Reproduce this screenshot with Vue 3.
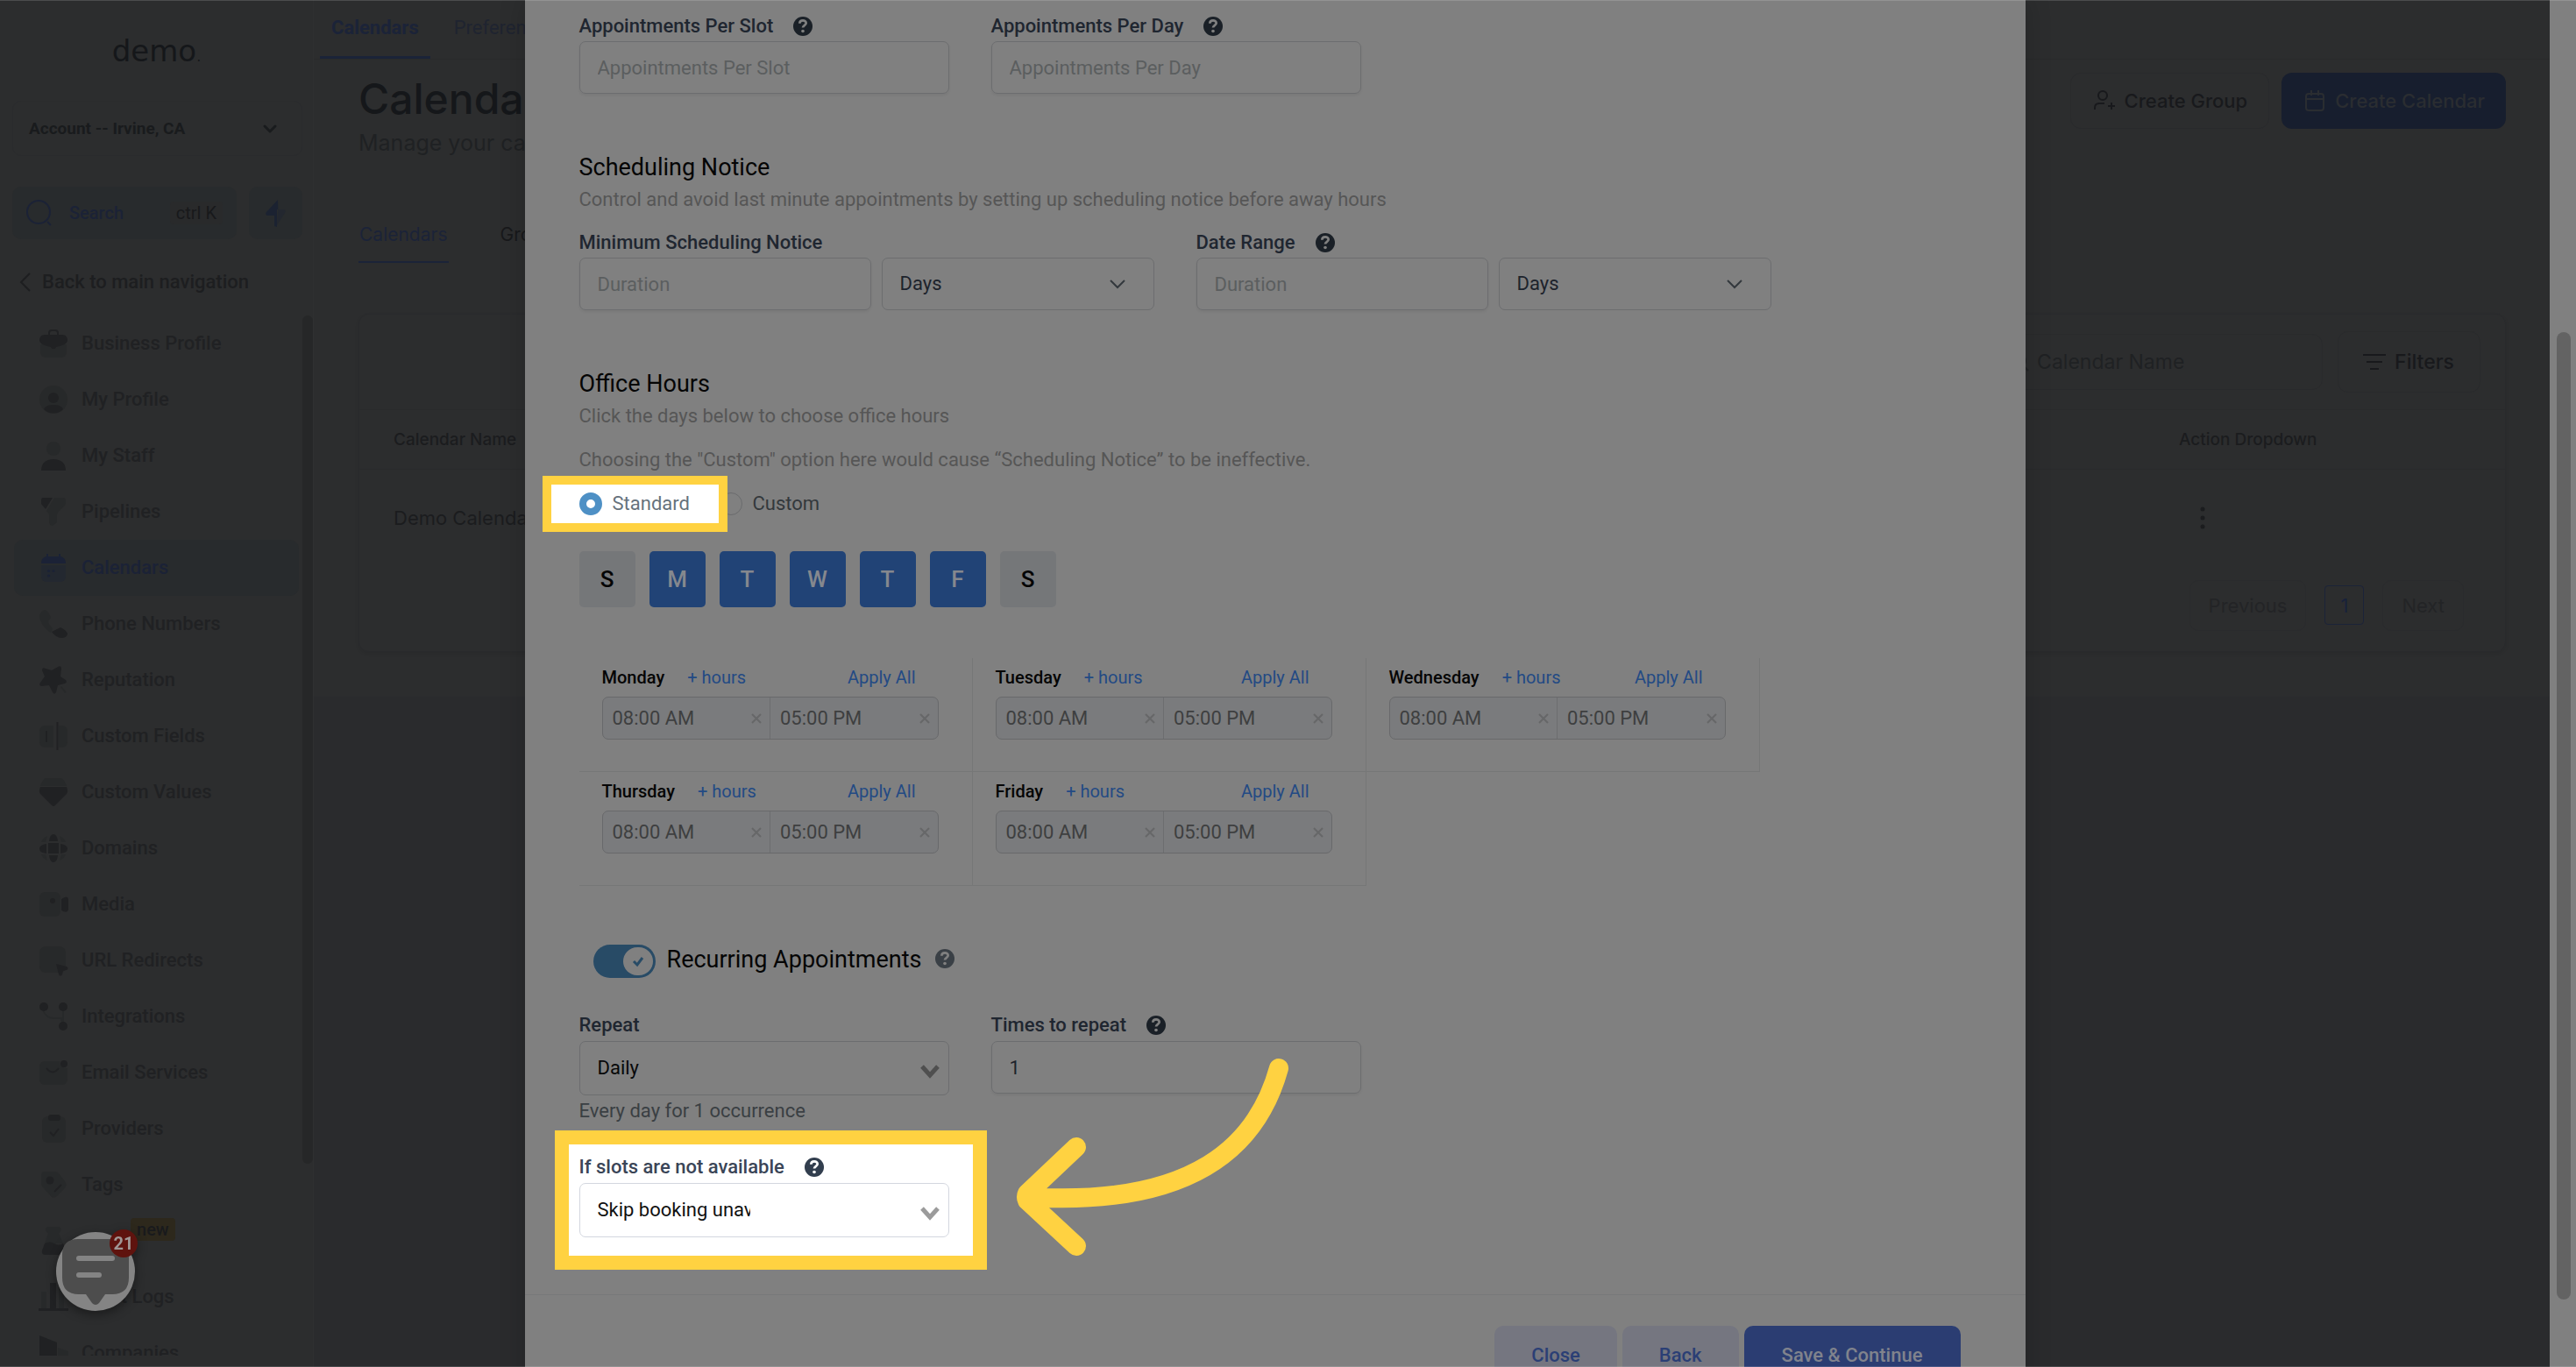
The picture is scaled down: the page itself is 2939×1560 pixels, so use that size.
<script setup>
import { ref } from 'vue'

const faint = 'opacity=".35"'
const navItems = [
  { label: 'Business Profile', icon: `<path ${faint} d="M1 17v9a6 6 0 0 0 6 6h18a6 6 0 0 0 6-6v-9z"/><path d="M6 6h4V4a4 4 0 0 1 4-4h4a4 4 0 0 1 4 4v2h4c4 0 6 3 6 6 0 5-8 7-13 8-1 3-5 3-6 0C8 19 0 17 0 12c0-3 2-6 6-6zm6 0h8V4a2 2 0 0 0-2-2h-4a2 2 0 0 0-2 2z"/>` },
  { label: 'My Profile', icon: `<circle ${faint} cx="16" cy="16" r="16"/><circle cx="16" cy="14" r="6"/><path d="M5 27c2-4 6-5 11-5s9 1 11 5c-6 6-16 6-22 0z"/>` },
  { label: 'My Staff', icon: `<circle ${faint} cx="16" cy="8" r="8"/><path d="M2 33c0-8 5-13 14-13s14 5 14 13z"/>` },
  { label: 'Pipelines', icon: `<path d="M4 0h11L7 13 2 7V3q0-3 2-3z"/><path ${faint} d="M17 0h10q3 0 3 3v3c0 5-10 8-10 14v8l-5 4q-4 0-4-5v-8l-3-4z"/>` },
  { label: 'Calendars', active: true, icon: `<path ${faint} d="M2 13h28v13a6 6 0 0 1-6 6H8a6 6 0 0 1-6-6z"/><path d="M8 0h2v3h12V0h2v3q6 1 6 8H2q0-7 6-8z"/><circle cx="10.500" cy="19.500" r="1.600"/><circle cx="16" cy="19.500" r="1.600"/><circle cx="10.500" cy="25" r="1.600"/>` },
  { label: 'Phone Numbers', icon: `<path ${faint} d="M6 0c4 1 6 6 7 9l-3 4c1 4 3 6 5 8l-2 5C5 21 0 13 0 6q2-5 6-6z"/><path d="M14 25l6-3 4-2c4 2 7 4 8 7 0 3-3 5-7 5-4 0-8-3-11-7z"/>` },
  { label: 'Reputation', icon: `<path d="M21 1q4-2 4 2l-1 9 6 4q2 3-1 4l-8 2-2 8q-2 3-4 0l-4-8-9 1q-3-1-1-4l5-7-3-7q0-4 4-2l7 2z"/><path ${faint} d="M25 23l6 7-2 1-5-7z"/>` },
  { label: 'Custom Fields', icon: `<path ${faint} d="M6 4h10v25H6a6 6 0 0 1-6-6V10a6 6 0 0 1 6-6zM22 4h4a6 6 0 0 1 6 6v13a6 6 0 0 1-6 6h-4z"/><path d="M19.500 0h2v32h-2zM7 10h2v13H7z"/>` },
  { label: 'Custom Values', icon: `<path ${faint} d="M8 0h16q4 0 7 9H1Q4 0 8 0z"/><path d="M1 10h30q2 5 0 8L18 31q-2 2-4 0L1 18q-2-3 0-8z"/>` },
  { label: 'Domains', icon: `<path d="M10 10h12v12H10zM11 8q1-8 5-8t5 8zM11 24h10q-1 8-5 8t-5-8zM8 11v11q-8-1-8-5.500T8 11zM24 11q8 1 8 5.500T24 22z"/><path ${faint} d="M9 2L7 9H2q2-5 7-7zM23 2l2 7h5q-2-5-7-7zM9 30l-2-7H2q2 5 7 7zM23 30l2-7h5q-2 5-7 7z"/>` },
  { label: 'Media', icon: `<rect ${faint} x="0" y="2" width="24" height="28" rx="6"/><circle cx="15" cy="12" r="3"/><path d="M25 10q7-5 8 0v12q-1 5-8 1z"/>` },
  { label: 'URL Redirects', icon: `<rect ${faint} x="0" y="0" width="30" height="30" rx="7"/><path d="M19 20l12 3q3 2 0 4l-4 1-1 4q-2 3-4 0z"/>` },
  { label: 'Integrations', icon: `<path ${faint} d="M4 8q4 9 12 9h10V6h2v18h-2l-2-5h-8Q6 18 3 8z"/><circle cx="5" cy="5" r="5"/><circle cx="27" cy="5" r="5"/><circle cx="27" cy="27" r="5"/>` },
  { label: 'Email Services', icon: `<path ${faint} d="M6 3h17q0 8 9 8v13a6 6 0 0 1-6 6H6a6 6 0 0 1-6-6V9a6 6 0 0 1 6-6z"/><path d="M8 11q7 9 14 0" fill="none" stroke="currentColor" stroke-width="2"/><circle cx="28" cy="6" r="4"/>` },
  { label: 'Providers', icon: `<rect ${faint} x="3" y="2" width="27" height="30" rx="6"/><rect x="10" y="0" width="14" height="7" rx="3"/><path d="M12 20l4 4 6-8" fill="none" stroke="currentColor" stroke-width="2"/>` },
  { label: 'Tags', icon: `<path ${faint} d="M6 1h11q3 0 5 2l7 9q3 4 0 8l-9 9q-4 3-7 0l-9-10q-2-2-2-4V5q0-4 4-4z"/><circle cx="12" cy="11" r="4.500"/><path d="M17 24l8-8" stroke="currentColor" stroke-width="2"/>` },
  { label: 'Labs', iconOnly: true, badge: 'new', icon: `<path ${faint} d="M9 0h14q3 3 0 7h-1l5 12H6l4-12H9q-4-4 0-7z"/><path d="M6 19q6-3 11 0t10 0l3 8q0 5-4 5H7q-5 0-4-5z"/>` },
  { label: 'Audit Logs', icon: `<path ${faint} d="M2 10h6v20H2zM22 4h6v26h-6z"/><path d="M12 0h7v30h-7zM-1 29h34v3H-1z"/>` },
  { label: 'Companies', icon: `<path d="M0-4l20 8v28H0z"/><path ${faint} d="M21 10l12 4v18H21z"/>` },
]

const days = ref([
  { key: 'sun', short: 'S', on: false },
  { key: 'mon', short: 'M', on: true },
  { key: 'tue', short: 'T', on: true },
  { key: 'wed', short: 'W', on: true },
  { key: 'thu', short: 'T', on: true },
  { key: 'fri', short: 'F', on: true },
  { key: 'sat', short: 'S', on: false },
])

const officeHours = ['Monday', 'Tuesday', 'Wednesday', 'Thursday', 'Friday']
const mode = ref('standard')
const recurring = ref(true)
const helpMark = 'M8 8.500c0-5 8-5 8-.500 0 3-4 3-4 5.500'
</script>

<template>
  <div class="window">
    <div class="shell">
      <aside class="sidebar">
        <div class="logo">demo<small>.</small></div>
        <button class="account" type="button">
          <span>Account -- Irvine, CA</span>
          <svg width="16" height="10" viewBox="0 0 16 10"><path d="M2 2l6 6 6-6" fill="none" stroke="currentColor" stroke-width="3" stroke-linecap="round" stroke-linejoin="round" /></svg>
        </button>
        <div class="search-row">
          <button class="search" type="button">
            <svg width="30" height="30" viewBox="0 0 30 30" fill="none" stroke="currentColor" stroke-width="2"><circle cx="14" cy="14" r="13" /><path d="M24 25l4 4" /></svg>
            <span>Search</span>
            <kbd>ctrl K</kbd>
          </button>
          <button class="bolt" type="button" aria-label="Quick actions">
            <svg width="24" height="31" viewBox="0 0 24 31" fill="currentColor"><path d="M14 0v11h-1v20l-3-1V18H2q-3-1-1-4z" /><path opacity=".4" d="M15 0v11h6q3 1 1 4l-9 14z" /></svg>
          </button>
        </div>
        <a class="back" href="#">
          <svg width="14" height="22" viewBox="0 0 14 22"><path d="M12 1L2 11l10 10" fill="none" stroke="currentColor" stroke-width="2" /></svg>
          Back to main navigation
        </a>
        <div class="nav-wrap">
          <nav>
            <a v-for="item in navItems" :key="item.label" href="#" :class="{ active: item.active }" :aria-label="item.label">
              <svg width="32" height="32" viewBox="0 0 32 32" fill="currentColor" v-html="item.icon"></svg>
              <span v-if="!item.iconOnly">{{ item.label }}</span>
              <em v-if="item.badge">{{ item.badge }}</em>
            </a>
          </nav>
          <div class="nav-thumb"></div>
        </div>
      </aside>

      <main class="main">
        <header class="topnav">
          <a href="#" class="current">Calendars</a>
          <a href="#">Preferences</a>
        </header>
        <div class="content">
          <div class="title-row">
            <div>
              <h1>Calendars</h1>
              <p>Manage your calendars and groups</p>
            </div>
            <div class="actions">
              <button type="button" class="outline">
                <svg width="24" height="24" viewBox="0 0 24 24" fill="none" stroke="currentColor" stroke-width="2"><circle cx="10" cy="6" r="5" /><path d="M1 22v-2q0-5 5-5h6M20 14v8M16 18h8" /></svg>
                Create Group
              </button>
              <button type="button" class="filled">
                <svg width="24" height="24" viewBox="0 0 24 24" fill="none" stroke="currentColor" stroke-width="2"><rect x="2" y="4" width="20" height="19" rx="3" /><path d="M2 10h20M8 0v6M16 0v6" /></svg>
                Create Calendar
              </button>
            </div>
          </div>
          <div class="tabs">
            <a href="#" class="current">Calendars</a>
            <a href="#">Groups</a>
          </div>
          <section class="card">
            <div class="toolbar">
              <label class="find">
                <svg width="22" height="22" viewBox="0 0 22 22" fill="none" stroke="currentColor" stroke-width="2"><circle cx="10" cy="10" r="8" /><path d="M16 16l5 5" /></svg>
                <input type="text" placeholder="Calendar Name" aria-label="Calendar Name" />
              </label>
              <button type="button">
                <svg width="26" height="20" viewBox="0 0 26 20" stroke="currentColor" stroke-width="2"><path d="M0 2h26M4 10h18M8 18h10" /></svg>
                Filters
              </button>
            </div>
            <table>
              <thead><tr><th>Calendar Name</th><th class="act">Action Dropdown</th></tr></thead>
              <tbody>
                <tr>
                  <td>Demo Calendar</td>
                  <td class="act">
                    <button type="button" aria-label="More actions">
                      <svg width="6" height="26" viewBox="0 0 6 26" fill="currentColor"><circle cx="3" cy="3" r="2.500" /><circle cx="3" cy="13" r="2.500" /><circle cx="3" cy="23" r="2.500" /></svg>
                    </button>
                  </td>
                </tr>
              </tbody>
            </table>
            <div class="pager">
              <button type="button">Previous</button>
              <button type="button" class="page">1</button>
              <button type="button">Next</button>
            </div>
          </section>
        </div>
      </main>

      <div class="chat">
        <svg width="90" height="90" viewBox="0 0 90 90">
          <circle cx="45" cy="45" r="45" fill="#848484" />
          <path d="M25 8h40q18 0 18 18v26q0 19-19 19h-8l-7 10q-4 4-8 0l-7-10h-8Q7 71 7 52V26Q7 8 25 8z" fill="#4d4d4d" />
          <path d="M26 30h38M26 49h23" stroke="#848484" stroke-width="6" stroke-linecap="round" />
        </svg>
        <span>21</span>
      </div>

      <div class="overlay">
        <form class="modal" @submit.prevent>
          <div class="body">
            <div class="fields">
              <div class="field">
                <div class="label"><label for="per-slot">Appointments Per Slot</label><svg class="help" viewBox="0 0 24 24"><circle cx="12" cy="12" r="12" /><path :d="helpMark" /><circle class="dot" cx="12" cy="18" r="2" /></svg></div>
                <input id="per-slot" type="text" placeholder="Appointments Per Slot" />
              </div>
              <div class="field">
                <div class="label"><label for="per-day">Appointments Per Day</label><svg class="help" viewBox="0 0 24 24"><circle cx="12" cy="12" r="12" /><path :d="helpMark" /><circle class="dot" cx="12" cy="18" r="2" /></svg></div>
                <input id="per-day" type="text" placeholder="Appointments Per Day" />
              </div>
            </div>

            <h2>Scheduling Notice</h2>
            <p class="hint">Control and avoid last minute appointments by setting up scheduling notice before away hours</p>
            <div class="fields notice">
              <div class="range">
                <div class="label"><label for="min-notice">Minimum Scheduling Notice</label></div>
                <div class="pair">
                  <input id="min-notice" type="text" placeholder="Duration" />
                  <div class="select">
                    <select aria-label="Minimum notice unit"><option>Days</option></select>
                    <svg width="18" height="12" viewBox="0 0 18 12"><path d="M1 2l8 8 8-8" /></svg>
                  </div>
                </div>
              </div>
              <div class="range">
                <div class="label"><label for="date-range">Date Range</label><svg class="help" viewBox="0 0 24 24"><circle cx="12" cy="12" r="12" /><path :d="helpMark" /><circle class="dot" cx="12" cy="18" r="2" /></svg></div>
                <div class="pair">
                  <input id="date-range" type="text" placeholder="Duration" />
                  <div class="select">
                    <select aria-label="Date range unit"><option>Days</option></select>
                    <svg width="18" height="12" viewBox="0 0 18 12"><path d="M1 2l8 8 8-8" /></svg>
                  </div>
                </div>
              </div>
            </div>

            <h2>Office Hours</h2>
            <p class="hint">Click the days below to choose office hours</p>
            <p class="hint warn">Choosing the "Custom" option here would cause “Scheduling Notice” to be ineffective.</p>
            <div class="modes">
              <label class="spot-mode"><input v-model="mode" type="radio" name="mode" value="standard" /><span>Standard</span></label>
              <label><input v-model="mode" type="radio" name="mode" value="custom" /><span>Custom</span></label>
            </div>
            <div class="days">
              <button v-for="d in days" :key="d.key" type="button" :class="{ on: d.on }" @click="d.on = !d.on">{{ d.short }}</button>
            </div>
            <div class="hours">
              <div v-for="name in officeHours" :key="name" class="day">
                <div class="day-head">
                  <strong>{{ name }}</strong>
                  <a href="#">+ hours</a>
                  <a href="#" class="apply">Apply All</a>
                </div>
                <div class="times">
                  <div><input type="text" value="08:00 AM" :aria-label="name + ' start'" /><button type="button" aria-label="Clear start"><svg width="12" height="12" viewBox="0 0 12 12"><path d="M1 1l10 10M11 1L1 11" /></svg></button></div>
                  <div><input type="text" value="05:00 PM" :aria-label="name + ' end'" /><button type="button" aria-label="Clear end"><svg width="12" height="12" viewBox="0 0 12 12"><path d="M1 1l10 10M11 1L1 11" /></svg></button></div>
                </div>
              </div>
            </div>

            <div class="recurring">
              <label class="toggle">
                <input v-model="recurring" type="checkbox" aria-label="Recurring Appointments" />
                <span class="knob"><svg width="14" height="12" viewBox="0 0 14 12"><path d="M2 6l4 4 6-8" /></svg></span>
              </label>
              <h2>Recurring Appointments</h2>
              <svg class="help" viewBox="0 0 24 24"><circle cx="12" cy="12" r="12" /><path :d="helpMark" /><circle class="dot" cx="12" cy="18" r="2" /></svg>
            </div>

            <div class="fields">
              <div class="field">
                <div class="label"><label for="repeat">Repeat</label></div>
                <div class="select tall">
                  <select id="repeat"><option>Daily</option></select>
                  <svg width="22" height="16" viewBox="0 0 22 16"><path d="M2 3l9 10 9-10" /></svg>
                </div>
                <p class="note">Every day for 1 occurrence</p>
              </div>
              <div class="field">
                <div class="label"><label for="times">Times to repeat</label><svg class="help" viewBox="0 0 24 24"><circle cx="12" cy="12" r="12" /><path :d="helpMark" /><circle class="dot" cx="12" cy="18" r="2" /></svg></div>
                <input id="times" type="text" value="1" />
              </div>
            </div>

            <div class="field spot-field">
              <div class="label"><label for="fallback">If slots are not available</label><svg class="help" viewBox="0 0 24 24"><circle cx="12" cy="12" r="12" /><path :d="helpMark" /><circle class="dot" cx="12" cy="18" r="2" /></svg></div>
              <div class="select tall clip">
                <select id="fallback"><option>Skip booking unavailable slots</option></select>
                <svg width="22" height="16" viewBox="0 0 22 16"><path d="M2 3l9 10 9-10" /></svg>
              </div>
              <svg class="arrow" width="320" height="240" viewBox="0 0 320 240"><path d="M307 19C283 106 212 178 20 166M76 109L20 162q-2 4 0 8L76 222" /></svg>
            </div>
          </div>
          <footer>
            <button type="button">Close</button>
            <button type="button">Back</button>
            <button type="submit" class="save">Save &amp; Continue</button>
          </footer>
        </form>
      </div>
    </div>
    <div class="scrollbar"><div></div></div>
  </div>
</template>

<style>
body { background: #2c2d2e; overflow: hidden; }
</style>

<style scoped>
*, *::before, *::after { box-sizing: border-box; }
.window { display: flex; height: 100vh; overflow: hidden; position: relative; font: 22px/32px Roboto, sans-serif; }
.window::after { content: ''; position: absolute; inset: 0; border: solid rgba(255, 255, 255, .15); border-width: 1px 0; pointer-events: none; }
button, input, select { font: inherit; color: inherit; margin: 0; }
button { cursor: pointer; border: 0; background: none; padding: 0; white-space: nowrap; }
a { color: inherit; text-decoration: none; }
h1, h2, p { margin: 0; font-weight: 400; }
svg { display: block; flex: none; overflow: visible; }
.shell { flex: 1; min-width: 0; display: flex; position: relative; overflow: hidden; background: #2c2d2e; }
.scrollbar { width: 30px; background: #808080; padding: 379px 6px 77px 8px; }
.scrollbar div { height: 100%; border-radius: 8px; background: #636363; }

.sidebar { width: 358px; flex: none; display: flex; flex-direction: column; border-right: 1px solid #2f3031; font-weight: 500; color: #202123; padding-bottom: 13px; }
.logo { height: 40px; font: 400 34px/40px "DejaVu Sans", sans-serif; color: #15171a; text-align: center; margin: 38px 0 37px; }
.logo small { font-size: 16px; line-height: 16px; }
.account { flex: none; display: flex; align-items: center; justify-content: space-between; height: 63px; margin: 0 12px 0 14px; padding: 0 28px 0 18px; border: 1px solid #2a2b2d; border-radius: 10px; font-size: 19px; color: #191b1d; font-weight: 700; }
.search-row { display: flex; gap: 14px; margin: 35px 12px 0 14px; }
.search { flex: 1; display: flex; align-items: center; height: 60px; padding: 0 16px; gap: 19px; border-radius: 10px; background: #282b2d; color: #1b2236; font-size: 20px; font-weight: 500; }
.search kbd { margin-left: auto; font: 400 20px/26px Roboto, sans-serif; color: #18191b; background: #292a2b; border-radius: 4px; padding: 0 7px; }
.bolt { width: 61px; display: flex; align-items: center; justify-content: center; border-radius: 10px; background: #282b2d; color: #1b2231; }
.back { display: flex; align-items: center; gap: 12px; padding-left: 22px; margin: 33px 0 22px; color: #1d1e20; }
.nav-wrap { flex: 1; min-height: 0; display: flex; }
nav { flex: 1; overflow: hidden; padding-left: 16px; padding-right: 4px; }
nav a { display: flex; align-items: center; gap: 16px; height: 64px; padding-left: 29px; border-radius: 10px; position: relative; }
nav a.active { background: #282b2d; color: #1b2236; }
nav em { position: absolute; left: 133px; top: 6px; font-style: normal; font-size: 20px; line-height: 26px; padding: 0 7px; border-radius: 4px; background: #2d281c; color: #191a1c; }
.nav-thumb { width: 12px; border-radius: 6px; background: #262728; margin-bottom: 219px; }

.main { flex: 1; min-width: 0; font-family: Inter, sans-serif; color: #18191c; background: linear-gradient(#2c2d2e 795px, #2a2b2d 795px); }
.topnav { display: flex; gap: 14px; height: 68px; padding-left: 7px; border-bottom: 1px solid #292a2b; font-family: Roboto, sans-serif; color: #1f2430; }
.topnav a { height: 67px; padding: 16px 13px 0; }
.topnav .current { font-weight: 700; color: #1b2338; border-bottom: 3px solid #1b2338; }
.content { padding: 15px 50px 0 51px; }
.title-row { display: flex; justify-content: space-between; height: 147px; }
h1 { font-size: 48px; line-height: 60px; font-weight: 500; color: #15171a; }
.title-row p { font-size: 25px; line-height: 40px; color: #1f2123; }
.actions { display: flex; gap: 14px; height: 64px; }
.actions button { display: flex; align-items: center; gap: 11px; border-radius: 12px; padding: 0 24px 0 26px; font-weight: 500; }
.actions .outline { border: 1px solid #292a2c; color: #18191c; }
.actions .filled { background: #171e2e; color: #2a2d31; }
.tabs { display: flex; gap: 58px; font-size: 21px; color: #18191b; margin-bottom: 58px; }
.tabs a { padding: 22px 1px 14px; }
.tabs .current { color: #1b2338; border-bottom: 2px solid #1b2338; }
.card { border: 1px solid #292a2c; border-radius: 12px; height: 386px; box-shadow: 0 2px 4px rgba(0, 0, 0, .08); }
.toolbar { display: flex; justify-content: flex-end; align-items: center; gap: 17px; height: 108px; padding-right: 28px; }
.find { display: flex; align-items: center; gap: 9px; width: 370px; height: 64px; border: 1px solid #292a2c; border-radius: 12px; padding-left: 12px; color: #202224; }
.find input { border: 0; background: none; outline: 0; min-width: 0; flex: 1; padding: 0; font-size: 23px; }
.find input::placeholder { color: #1f2123; opacity: 1; }
.toolbar button { display: flex; align-items: center; gap: 10px; height: 70px; padding: 0 29px 0 28px; border: 1px solid #292a2c; border-radius: 12px; font-weight: 500; font-size: 23px; }
table { width: 100%; border-collapse: collapse; }
th { height: 68px; border: solid #292a2c; border-width: 1px 0; text-align: left; font-size: 19px; font-weight: 500; padding: 0 0 0 39px; color: #1b1c1e; }
td { height: 110px; padding: 0 0 0 39px; color: #1b1c1e; }
td button { display: block; }
.act { width: 410px; padding-left: 38px; }
td.act { padding-left: 62px; }
.pager { display: flex; justify-content: flex-end; align-items: center; gap: 21px; padding: 16px 47px 0 0; color: #232426; }
.pager button { height: 58px; padding: 0 21px; border: 1px solid #2a2b2d; border-radius: 10px; font-size: 22px; }
.pager .page { height: 45px; width: 45px; padding: 0; border-radius: 4px; border-color: #1b2338; color: #18213a; }

.chat { position: absolute; left: 64px; bottom: 64px; filter: drop-shadow(0 4px 6px rgba(0, 0, 0, .4)); }
.chat span { position: absolute; left: 61px; top: -3px; width: 32px; height: 32px; border-radius: 50%; background: #5f130e; color: #a09694; font-size: 20px; font-weight: 700; text-align: center; }

.overlay { position: absolute; inset: 0; display: flex; justify-content: center; overflow: hidden; }
.modal { width: 100%; max-width: 1712px; flex: none; align-self: flex-start; background: #808080; box-shadow: 0 0 28px rgba(0, 0, 0, .18); color: #1d232c; }
.body { padding: 14px 62px 65px; }
.fields { display: flex; gap: 48px; }
.field { width: 422px; }
.label { display: flex; align-items: center; gap: 23px; margin-bottom: 1px; font-weight: 500; color: #1f2630; }
.help { width: 22px; height: 22px; fill: #1a2027; }
.help path { fill: none; stroke: #808080; stroke-width: 3; }
.help .dot { fill: #808080; }
.field > input, .pair > input { display: block; width: 100%; height: 60px; padding: 0 20px; border: 1px solid #6c6d6f; border-radius: 7px; background: none; outline: 0; box-shadow: 0 2px 3px rgba(0, 0, 0, .06); }
.field > input::placeholder, .pair > input::placeholder { color: #5b5e5f; opacity: 1; }
.select { position: relative; height: 60px; }
.select select { appearance: none; width: 100%; height: 100%; padding: 0 20px; border: 1px solid #6c6d6f; border-radius: 7px; background: none; outline: 0; }
.select svg { position: absolute; right: 33px; top: 24px; pointer-events: none; fill: none; stroke: #33383d; stroke-width: 2; }
.select.tall { height: 62px; color: #08090a; }
.select.tall svg { right: 11px; top: 26px; stroke: #4f4f4f; stroke-width: 5; }
h2 { font-size: 27px; line-height: 36px; color: #050505; }
.fields + h2 { margin-top: 66px; }
.hint { color: #565656; margin-top: 3px; }
.hint.warn { margin-top: 18px; }
.notice { margin-top: 17px; }
.pair { display: flex; gap: 12px; }
.range { width: 656px; }
.pair > input { width: 333px; }
.pair .select { flex: 1; }
.modes { display: flex; margin-top: 18px; }
.modes label { width: 160px; display: flex; align-items: center; gap: 12px; position: relative; color: #33383c; }
.modes input { appearance: none; width: 26px; height: 26px; border: 1px solid #6a6b6d; border-radius: 50%; }
.modes input:checked { border: 8px solid #4e90c5; background: #fff; }
.modes .spot-mode { z-index: 1; color: #66727c; }
.spot-mode::before { content: ''; position: absolute; z-index: -1; left: -42px; top: -16px; width: 211px; height: 64px; border: 10px solid #ffd241; background: #fff; }
.days { display: flex; gap: 16px; margin-top: 38px; }
.days button { width: 64px; height: 64px; border-radius: 5px; background: #757779; color: #050505; font-size: 26px; font-weight: 500; }
.days .on { background: #214376; color: #85888e; }
.hours { display: grid; grid-template-columns: repeat(3, 449px); margin-top: 58px; }
.day { height: 130px; padding: 8px 38px 0 26px; border: solid #767777; border-width: 0 1px 1px 0; }
.day-head { display: flex; gap: 26px; font-size: 20px; line-height: 28px; color: #234a84; padding-right: 26px; margin-bottom: 8px; }
.day-head strong { font-weight: 500; color: #050505; }
.day-head .apply { margin-left: auto; }
.times { display: flex; height: 49px; border: 1px solid #68696b; border-radius: 7px; background: #7a7b7d; color: #3e3f40; }
.times div { flex: 1; min-width: 0; display: flex; align-items: center; padding: 0 9px 0 11px; }
.times div + div { border-left: 1px solid #6c6d6f; }
.times input { flex: 1; min-width: 0; border: 0; padding: 0; background: none; outline: 0; }
.times path { stroke: #666768; stroke-width: 2; }
.recurring { display: flex; align-items: center; height: 38px; margin: 67px 0 38px 16px; }
.recurring h2 { margin: 0 16px 4px 13px; }
.recurring .help { fill: #3a4046; margin-bottom: 6px; }
.toggle { position: relative; width: 71px; height: 38px; }
.toggle input { appearance: none; display: block; width: 100%; height: 100%; border-radius: 19px; background: #284b66; }
.knob { position: absolute; right: 3px; top: 3px; width: 34px; height: 32px; border-radius: 17px; background: #808080; display: flex; align-items: center; justify-content: center; pointer-events: none; }
.knob path { fill: none; stroke: #284b66; stroke-width: 3; }
.recurring + .fields .label, .spot-field .label { margin-bottom: 2px; }
.note { color: #3a3f43; margin-top: 2px; }
.spot-field { position: relative; z-index: 1; margin-top: 32px; }
.spot-field::before { content: ''; position: absolute; z-index: -1; left: -28px; top: -26px; width: 493px; height: 159px; border: 16px solid #ffd241; background: #fff; }
.spot-field .label { color: #3a4557; }
.spot-field .help { fill: #323e4e; }
.spot-field .help path { stroke: #fff; }
.spot-field .help .dot { fill: #fff; }
.spot-field .select select { border-color: #d3d7df; color: #111; }
.spot-field .select svg { stroke: #9b9b9b; }
.clip select { padding-right: 226px; }
.arrow { position: absolute; left: 491px; top: -116px; fill: none; stroke: #ffd241; stroke-width: 22; stroke-linecap: round; stroke-linejoin: round; pointer-events: none; }
footer { display: flex; justify-content: flex-end; gap: 6px; border-top: 1px solid #77797a; padding: 35px 74px 40px; }
footer button { height: 68px; padding: 0 42px; border-radius: 10px; background: #757680; color: #2b3f75; font-weight: 500; }
footer .save { background: #2b3d72; color: #80838d; padding: 0 43px; }
</style>
